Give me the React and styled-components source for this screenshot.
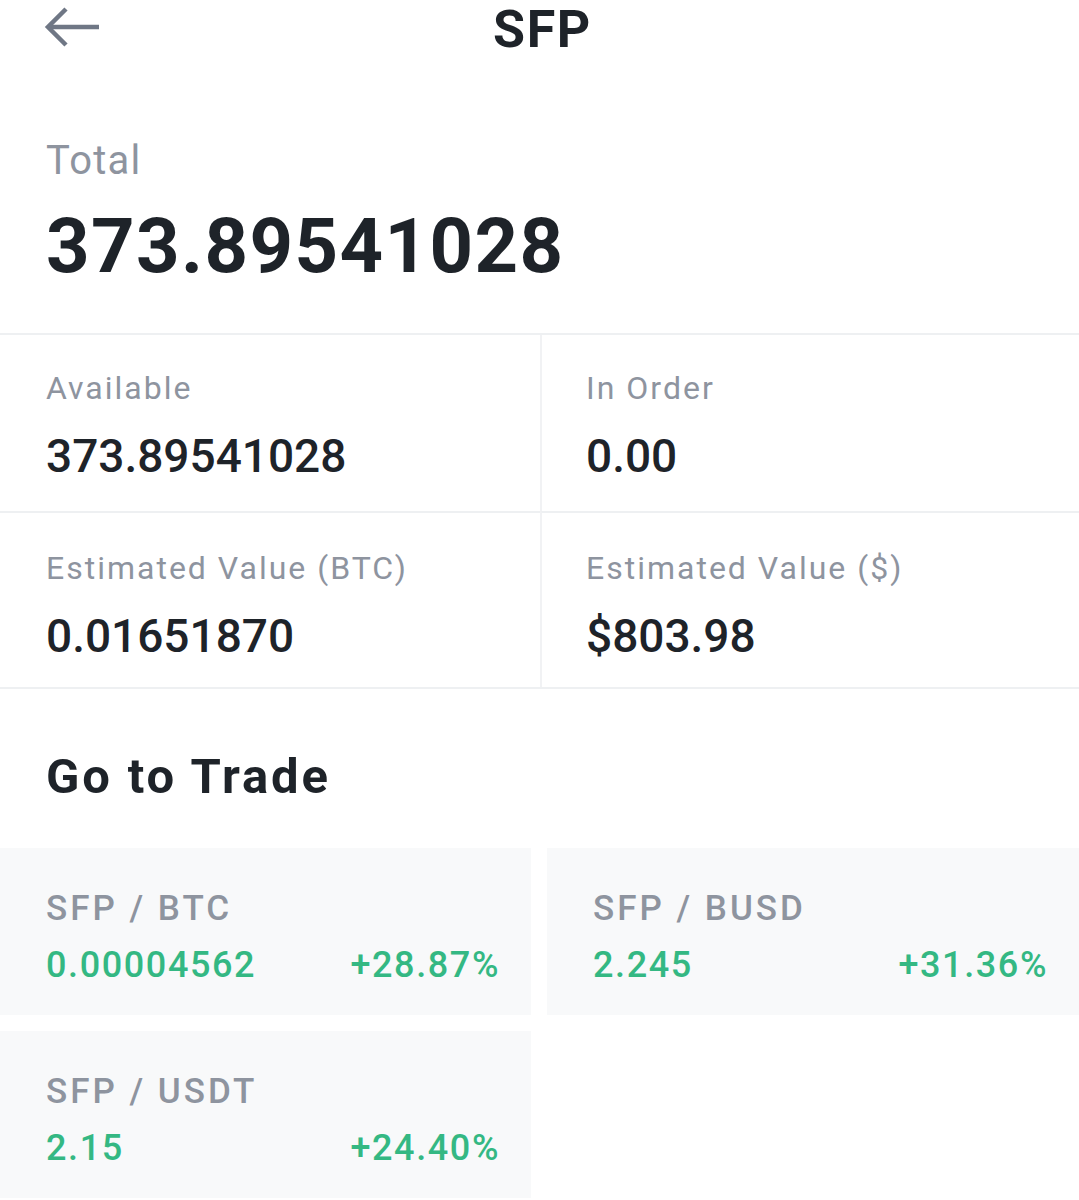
import React from "react";
import styled, { createGlobalStyle } from "styled-components";

const Global = createGlobalStyle`
  html, body { margin: 0; padding: 0; background: #ffffff; }
  body { font-family: Roboto, "Noto Sans", "Liberation Sans", sans-serif; color: #1e2329; }
  * { box-sizing: border-box; }
`;

const Page = styled.div`
  width: 1079px;
  min-height: 1200px;
  overflow: hidden;
  background: #fff;
`;

const Header = styled.header`
  position: relative;
  height: 60px;
  display: flex;
  align-items: flex-start;
  justify-content: center;
`;

const BackButton = styled.button`
  position: absolute;
  left: 43px;
  top: 5px;
  width: 60px;
  height: 44px;
  padding: 0;
  border: 0;
  background: transparent;
  display: flex;
  align-items: center;
`;

const Title = styled.h1`
  margin: 0 0 0 6px;
  font-size: 52px;
  line-height: 60px;
  font-weight: 700;
  letter-spacing: 1.6px;
  color: #1e2329;
`;

const TotalSection = styled.section`
  padding: 77px 46px 44px;
  border-bottom: 2px solid #eef0f2;
`;

const TotalLabel = styled.div`
  font-size: 40px;
  line-height: 48px;
  color: #8e949f;
  letter-spacing: 1.2px;
`;

const TotalValue = styled.div`
  margin-top: 18px;
  font-size: 76px;
  line-height: 86px;
  font-weight: 700;
  letter-spacing: 1.4px;
  color: #1e2329;
`;

const StatsGrid = styled.div`
  display: grid;
  grid-template-columns: 540px 1fr;
  border-bottom: 2px solid #eef0f2;
`;

const StatCell = styled.div`
  height: 176px;
  padding: ${(p) => (p.$row === 1 ? "33px" : "35px")} 46px 0;
  border-left: ${(p) => (p.$right ? "2px solid #f1f2f4" : "none")};
  border-top: ${(p) => (p.$row === 2 ? "2px solid #eef0f2" : "none")};
  padding-left: ${(p) => (p.$right ? "44px" : "46px")};
`;

const StatLabel = styled.div`
  font-size: 32px;
  line-height: 40px;
  color: #8e949f;
  letter-spacing: 2px;
`;

const StatValue = styled.div`
  margin-top: 21px;
  font-size: 46px;
  line-height: 54px;
  font-weight: 500;
  letter-spacing: 0px;
  color: #1e2329;
`;

const SectionTitle = styled.h2`
  margin: 0;
  padding: 60px 46px 43px;
  font-size: 49px;
  line-height: 56px;
  font-weight: 700;
  letter-spacing: 2.8px;
  color: #1e2329;
`;

const CardGrid = styled.div`
  display: grid;
  grid-template-columns: 531px 532px;
  column-gap: 16px;
  row-gap: 16px;
`;

const Card = styled.div`
  height: 167px;
  background: #f8f9fa;
  padding: 41px 31px 0 46px;
`;

const PairName = styled.div`
  font-size: 35px;
  line-height: 40px;
  color: #8e949f;
  letter-spacing: 3px;
  font-weight: 500;
`;

const PriceRow = styled.div`
  margin-top: 15px;
  display: flex;
  justify-content: space-between;
  align-items: baseline;
  font-size: 36px;
  line-height: 42px;
  font-weight: 500;
  color: #34b883;
  letter-spacing: 1.6px;
`;

const ArrowIcon = () => (
  <svg width="58" height="42" viewBox="0 0 58 42" fill="none">
    <path d="M56 21H6" stroke="#6f7785" strokeWidth="4.5" />
    <path d="M23 3L5 21L23 39" stroke="#6f7785" strokeWidth="4.5" strokeLinejoin="miter" />
  </svg>
);

const stats = [
  { label: "Available", value: "373.89541028", row: 1, right: false },
  { label: "In Order", value: "0.00", row: 1, right: true },
  { label: "Estimated Value (BTC)", value: "0.01651870", row: 2, right: false },
  { label: "Estimated Value ($)", value: "$803.98", row: 2, right: true },
];

const pairs = [
  { name: "SFP / BTC", price: "0.00004562", change: "+28.87%" },
  { name: "SFP / BUSD", price: "2.245", change: "+31.36%" },
  { name: "SFP / USDT", price: "2.15", change: "+24.40%" },
];

export default function App() {
  return (
    <Page>
      <Global />
      <Header>
        <BackButton aria-label="Back">
          <ArrowIcon />
        </BackButton>
        <Title>SFP</Title>
      </Header>
      <TotalSection>
        <TotalLabel>Total</TotalLabel>
        <TotalValue>373.89541028</TotalValue>
      </TotalSection>
      <StatsGrid>
        {stats.map((s) => (
          <StatCell key={s.label} $row={s.row} $right={s.right}>
            <StatLabel>{s.label}</StatLabel>
            <StatValue>{s.value}</StatValue>
          </StatCell>
        ))}
      </StatsGrid>
      <SectionTitle>Go to Trade</SectionTitle>
      <CardGrid>
        {pairs.map((p) => (
          <Card key={p.name}>
            <PairName>{p.name}</PairName>
            <PriceRow>
              <span>{p.price}</span>
              <span>{p.change}</span>
            </PriceRow>
          </Card>
        ))}
      </CardGrid>
    </Page>
  );
}
